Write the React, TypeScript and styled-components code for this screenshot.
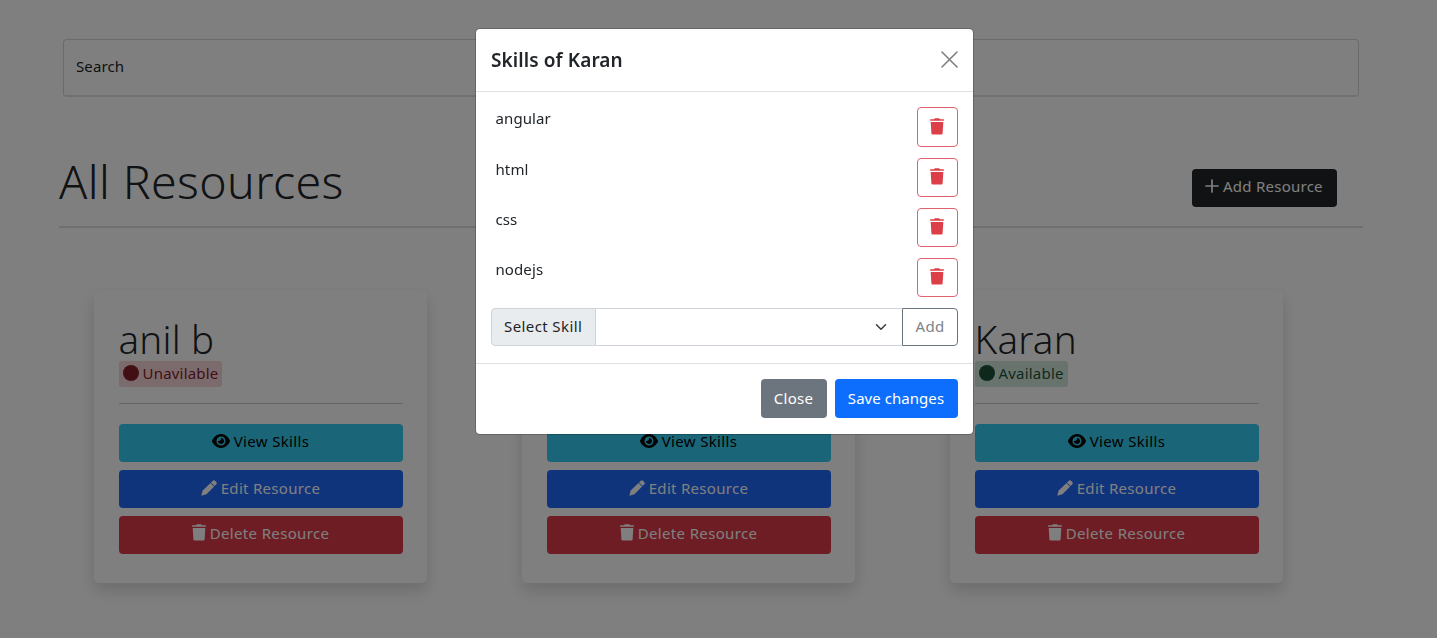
import React from "react";
import styled, { createGlobalStyle } from "styled-components";
import { FaCircle, FaEye } from "react-icons/fa6";

const GlobalStyle = createGlobalStyle`
  *, *::before, *::after { box-sizing: border-box; }
  html, body { margin: 0; height: 638px; overflow: hidden; background: #fff; }
  body {
    font-family: "Noto Sans", "Open Sans", sans-serif;
    font-size: 15px;
    line-height: 24px;
    color: #212529;
  }
  button { font: inherit; cursor: pointer; }
  svg { flex: none; display: block; }
`;

const Page = styled.main`
  height: 638px;
  padding: 39px 74px 0 59px;
  overflow: hidden;
`;

const SearchBox = styled.div`
  display: flex;
  align-items: center;
  height: 58px;
  margin: 0 4px;
  padding: 0 12px 4px;
  border: 1px solid #d4d6d8;
  border-bottom: 2px solid #e0e1e2;
  border-radius: 4px;
`;

const Text = styled.span<{ $spacing?: number }>`
  letter-spacing: ${(p) => p.$spacing ?? 0}px;
  white-space: nowrap;
`;

const TitleRow = styled.header`
  display: flex;
  justify-content: space-between;
  align-items: flex-start;
  height: 131px;
  padding: 55px 26px 0 0;
  border-bottom: 2px solid #e0e0e0;
`;

const PageTitle = styled.h1`
  margin: 0;
  font-size: 46.5px;
  font-weight: 300;
  line-height: 58px;
  letter-spacing: 0.4px;
`;

const AddButton = styled.button`
  display: flex;
  align-items: center;
  gap: 4px;
  width: 145px;
  height: 38px;
  margin-top: 16.5px;
  padding: 0 13px 4px;
  color: #fff;
  background: #212529;
  border: 0;
  border-radius: 4px;
`;

const Cards = styled.section`
  display: flex;
  gap: 95.5px;
  padding: 62px 0 0 35px;
`;

const Card = styled.article`
  width: 332.5px;
  height: 293px;
  padding: 25px 24px 25px 24.5px;
  border-radius: 5px;
  background: #fff;
  box-shadow: 0 8px 16px rgba(0, 0, 0, 0.15);
`;

const Name = styled.h2`
  margin: 0;
  height: 46px;
  font-size: 38.5px;
  font-weight: 300;
  line-height: 48px;
  letter-spacing: 0.2px;
`;

const StatusLine = styled.div`
  height: 27px;
`;

const Status = styled.div<{ $available: boolean }>`
  display: inline-flex;
  align-items: center;
  gap: 4px;
  height: 26px;
  padding: 0 4px 2px;
  border-radius: 3px;
  vertical-align: top;
  background: ${(p) => (p.$available ? "#d1e7dd" : "#f8d7da")};
  color: ${(p) => (p.$available ? "#1c5338" : "#842029")};
`;

const Rule = styled.hr`
  height: 1px;
  margin: 15px 0 20px;
  border: 0;
  background: #c8c9ca;
`;

const Actions = styled.div`
  display: grid;
  grid-template-rows: 37.5px 38.5px 37.5px;
  row-gap: 8px;
`;

const ActionButton = styled.button<{ $bg: string; $fg: string; $lift?: number }>`
  display: flex;
  align-items: center;
  justify-content: center;
  gap: 4px;
  padding: 0 0 ${(p) => p.$lift ?? 3}px;
  border: 0;
  border-radius: 4px;
  background: ${(p) => p.$bg};
  color: ${(p) => p.$fg};
`;

const Backdrop = styled.div`
  position: fixed;
  inset: 0;
  display: flex;
  align-items: flex-start;
  padding: 28px 0 0 475px;
  background: rgba(0, 0, 0, 0.5);
`;

const Dialog = styled.div`
  width: 499px;
  height: 407px;
  border: 1px solid rgba(0, 0, 0, 0.2);
  border-radius: 5px;
  background: #fff;
  background-clip: padding-box;
`;

const DialogHeader = styled.div`
  display: flex;
  align-items: center;
  justify-content: space-between;
  height: 63px;
  padding: 0 15.500px 2px 15px;
  border-bottom: 1px solid #dee2e6;
`;

const DialogTitle = styled.h5`
  margin: 0;
  padding-top: 2px;
  font-size: 19px;
  font-weight: 600;
  line-height: 30px;
  letter-spacing: 0.1px;
`;

const CloseIcon = styled.button`
  display: flex;
  padding: 0;
  border: 0;
  background: none;
`;

const DialogBody = styled.div`
  height: 272px;
  padding: 15px 15px 0;
  border-bottom: 1px solid #dee2e6;
`;

const SkillRow = styled.div<{ $first?: boolean }>`
  display: flex;
  justify-content: space-between;
  align-items: flex-start;
  height: ${(p) => (p.$first ? 51 : 50)}px;
  padding-left: 4.5px;
  line-height: 23px;
`;

const TrashButton = styled.button<{ $tall?: boolean }>`
  display: flex;
  justify-content: center;
  width: 41px;
  height: ${(p) => (p.$tall ? 39.5 : 38.5)}px;
  padding: ${(p) => (p.$tall ? 10 : 9)}px 1px 0 0;
  color: #dc3f47;
  background: #fff;
  border: 1px solid #e0626e;
  border-radius: 4px;
`;

const InputGroup = styled.div`
  display: flex;
  height: 38px;
`;

const GroupLabel = styled.div`
  width: 105px;
  padding: 5px 0 0 12px;
  background: #e9ecef;
  border: 1px solid #ced4da;
  border-radius: 4px 0 0 4px;
`;

const SelectBox = styled.div`
  display: flex;
  flex: 1;
  align-items: center;
  justify-content: flex-end;
  padding-right: 15px;
  border: solid #ced4da;
  border-width: 1px 0;
`;

const GroupButton = styled.button`
  width: 56px;
  padding: 0 0 3px;
  color: #7b838a;
  background: #fff;
  border: 1px solid #6c757d;
  border-radius: 0 4px 4px 0;
`;

const DialogFooter = styled.div`
  display: flex;
  justify-content: flex-end;
  gap: 8px;
  padding: 15px 15px 0;
`;

const FooterButton = styled.button<{ $bg: string; $width: number }>`
  width: ${(p) => p.$width}px;
  height: 39px;
  padding: 0 1px 2px 0;
  border: 0;
  border-radius: 4px;
  color: #fff;
  background: ${(p) => p.$bg};
`;

const TrashIcon = () => (
  <svg width="14" height="17" viewBox="0 0 14 17" fill="currentColor">
    <path d="M.6 1.2H4L4.6.5Q4.8.2 5.2.2h3.6q.4 0 .6.3l.6.7h3.4q.6 0 .6.6v.3q0 .6-.6.6H.6Q0 2.700 0 2.100v-.3q0-.6.6-.6Z" />
    <path d="M.7 3.900h12.600l-.7 11.600q-.1 1.100-1.200 1.100H2.600q-1.100 0-1.200-1.100Z" />
  </svg>
);

const PenIcon = () => (
  <svg width="16" height="16" viewBox="0 0 16 16" fill="currentColor">
    <path d="M9.500 2.900 13.100 6.500 5.500 14.200.3 15.700 1.700 10.600Z" />
    <path d="M10 2.400 11.500.9a1.900 1.900 0 0 1 2.700 0l.9.9a1.900 1.900 0 0 1 0 2.700L13.600 6Z" />
  </svg>
);

const PlusIcon = () => (
  <svg width="14" height="14" viewBox="0 0 14 14">
    <path d="M7 1v12M1 7h12" stroke="currentColor" strokeWidth="1.7" strokeLinecap="round" />
  </svg>
);

const resources = [
  { id: 1, name: "anil b", available: false },
  { id: 2 },
  { id: 3, name: "Karan", available: true },
];

const skills = ["angular", "html", "css", "nodejs"];

export default function App() {
  return (
    <>
      <GlobalStyle />
      <Page>
        <SearchBox>
          <Text $spacing={0.1}>Search</Text>
        </SearchBox>
        <TitleRow>
          <PageTitle>All Resources</PageTitle>
          <AddButton>
            <PlusIcon />
            <Text $spacing={0.25}>Add Resource</Text>
          </AddButton>
        </TitleRow>
        <Cards>
          {resources.map((r) => (
            <Card key={r.id}>
              <Name>{r.name}</Name>
              <StatusLine>
                {r.available !== undefined && (
                  <Status $available={r.available}>
                    <FaCircle size={16} />
                    <Text $spacing={0.2}>{r.available ? "Available" : "Unavilable"}</Text>
                  </Status>
                )}
              </StatusLine>
              <Rule />
              <Actions>
                <ActionButton $bg="#34ccf0" $fg="#000">
                  <FaEye size={18} />
                  <Text $spacing={0.35}>View Skills</Text>
                </ActionButton>
                <ActionButton $bg="#2068f8" $fg="#fff" $lift={2}>
                  <PenIcon />
                  <Text $spacing={0.3}>Edit Resource</Text>
                </ActionButton>
                <ActionButton $bg="#dc3a48" $fg="#fff" $lift={4}>
                  <TrashIcon />
                  <Text $spacing={0.35}>Delete Resource</Text>
                </ActionButton>
              </Actions>
            </Card>
          ))}
        </Cards>
      </Page>
      <Backdrop>
        <Dialog role="dialog">
          <DialogHeader>
            <DialogTitle>Skills of Karan</DialogTitle>
            <CloseIcon aria-label="Close">
              <svg width="17" height="17" viewBox="0 0 17 17">
                <path d="M1 1 16 16M16 1 1 16" stroke="#808080" strokeWidth="1.6" strokeLinecap="round" />
              </svg>
            </CloseIcon>
          </DialogHeader>
          <DialogBody>
            {skills.map((s, i) => (
              <SkillRow key={s} $first={i === 0}>
                <Text $spacing={0.1}>{s}</Text>
                <TrashButton $tall={i === 0} aria-label={`Remove ${s}`}>
                  <TrashIcon />
                </TrashButton>
              </SkillRow>
            ))}
            <InputGroup>
              <GroupLabel>
                <Text $spacing={0.4}>Select Skill</Text>
              </GroupLabel>
              <SelectBox>
                <svg width="12" height="12" viewBox="0 0 16 16">
                  <path d="m2 5 6 6 6-6" fill="none" stroke="#343a40" strokeWidth="2" strokeLinecap="round" strokeLinejoin="round" />
                </svg>
              </SelectBox>
              <GroupButton>
                <Text $spacing={0.3}>Add</Text>
              </GroupButton>
            </InputGroup>
          </DialogBody>
          <DialogFooter>
            <FooterButton $bg="#6c757d" $width={66}>
              <Text $spacing={0.3}>Close</Text>
            </FooterButton>
            <FooterButton $bg="#0d6efd" $width={123}>
              <Text $spacing={0.05}>Save changes</Text>
            </FooterButton>
          </DialogFooter>
        </Dialog>
      </Backdrop>
    </>
  );
}
